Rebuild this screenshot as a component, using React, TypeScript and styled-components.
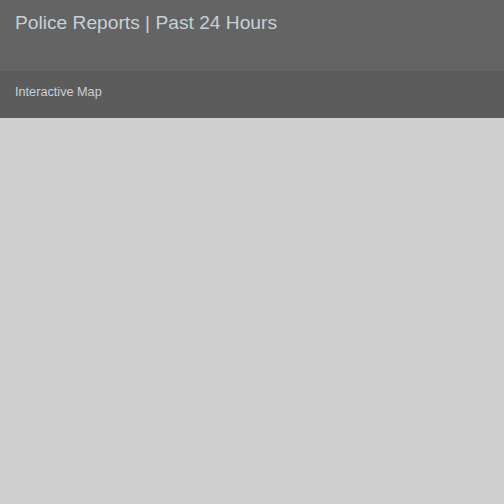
import React from "react";
import styled, { createGlobalStyle } from "styled-components";

const Global = createGlobalStyle`
  html, body { margin: 0; padding: 0; background: #cfcfcf; }
  body { font-family: "Liberation Sans", Arial, sans-serif; }
`;

const Page = styled.div`
  min-height: 504px;
  background: #cfcfcf;
`;

const TitleBar = styled.header`
  height: 71px;
  background: #646464;
  padding: 12px 15px 0;
  box-sizing: border-box;
`;

const Title = styled.h1`
  margin: 0;
  font-size: 19.2px;
  font-weight: normal;
  color: #c9d0d8;
  line-height: 22px;
`;

const NavBar = styled.nav`
  height: 47px;
  background: #5c5c5c;
  display: flex;
  align-items: flex-start;
  padding: 14px 15px 0;
  box-sizing: border-box;
`;

const NavLink = styled.span`
  font-size: 12.7px;
  line-height: 15px;
  color: #c9d0d8;
`;

export default function App() {
  return (
    <Page>
      <Global />
      <TitleBar>
        <Title>Police Reports | Past 24 Hours</Title>
      </TitleBar>
      <NavBar>
        <NavLink>Interactive Map</NavLink>
      </NavBar>
    </Page>
  );
}
